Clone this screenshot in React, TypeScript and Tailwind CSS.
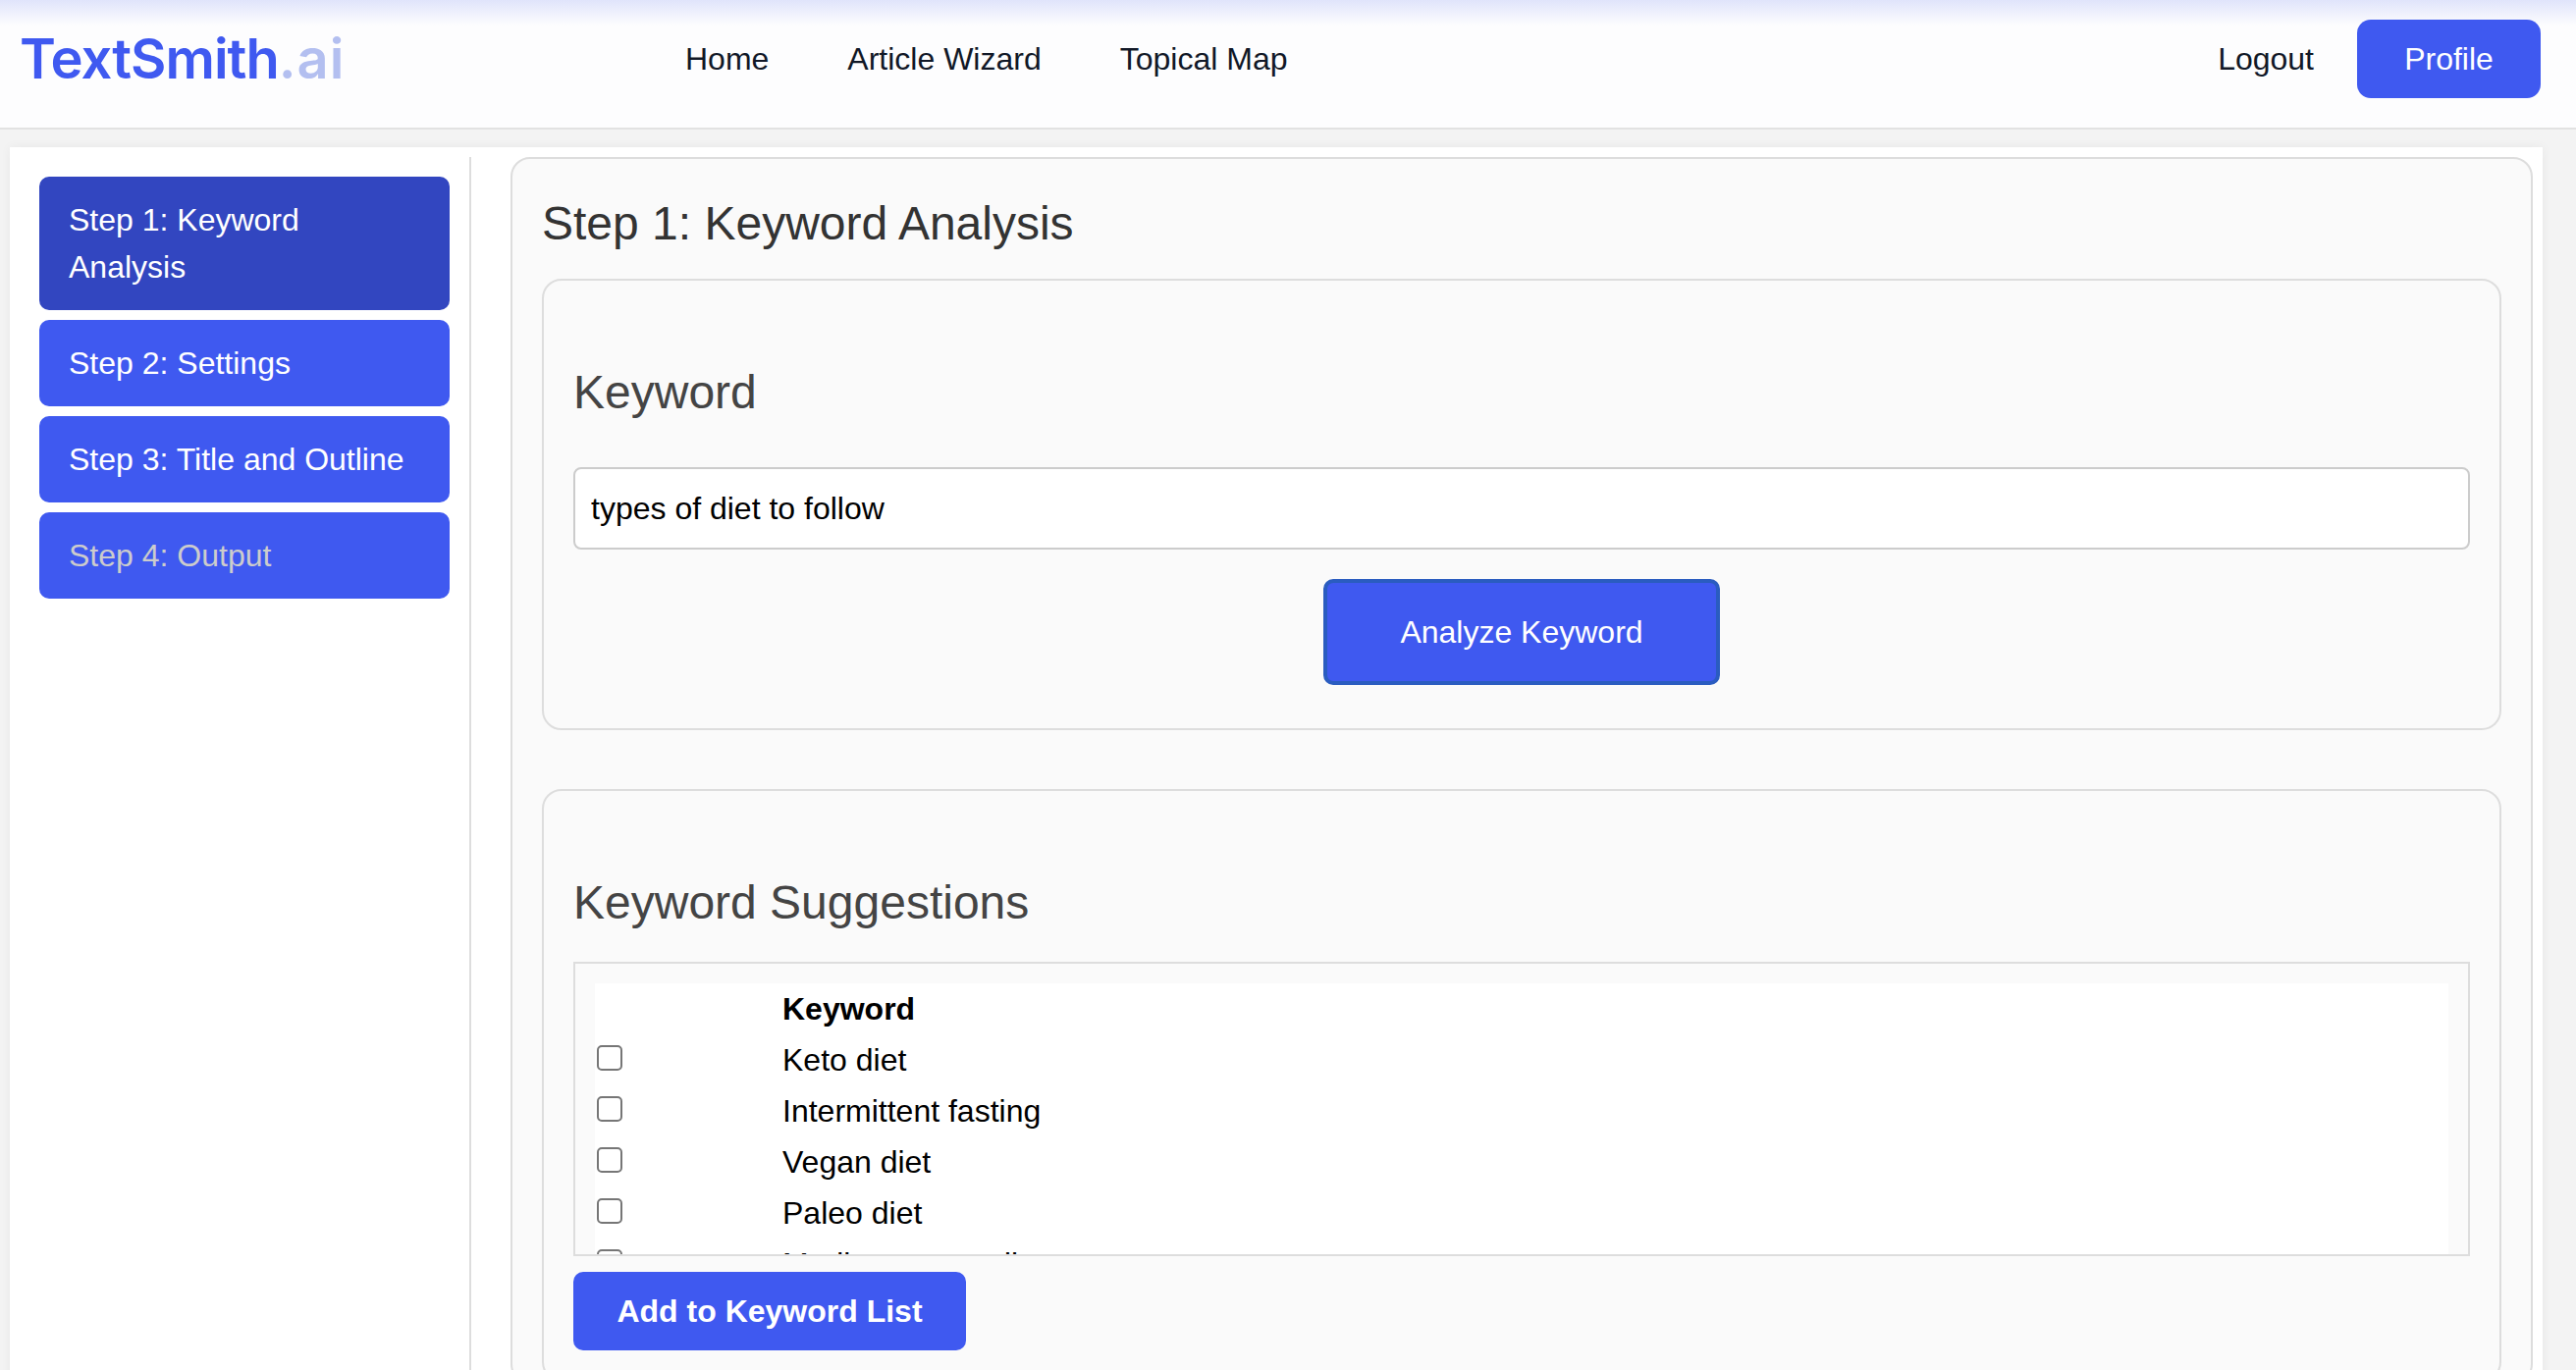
const sans = "font-['Liberation_Sans',Arial,sans-serif]";

const steps = [
  { label: "Step 1: Keyword Analysis", active: true },
  { label: "Step 2: Settings" },
  { label: "Step 3: Title and Outline" },
  { label: "Step 4: Output", muted: true },
];

const suggestions = ["Keto diet", "Intermittent fasting", "Vegan diet", "Paleo diet", "Mediterranean diet", "Low carb diet"];

const Header = () => (
  <header className="h-[132px] border-b-2 border-[#e2e2e2] bg-[linear-gradient(to_bottom,#e0e4fb_0px,#fdfdfe_26px)] pl-5 pr-9 pb-[10px] flex items-center">
    <div className="w-[678px] font-['Inter',sans-serif] font-semibold text-[56px] leading-none text-[#3f59f0] tracking-[-1px]">
      TextSmith<span className="text-[#b3bff0] tracking-[1px]">.ai</span>
    </div>
    <nav className="flex gap-20 text-[32px] text-[#111827]">
      <a>Home</a>
      <a>Article Wizard</a>
      <a>Topical Map</a>
    </nav>
    <div className="ml-auto flex items-center gap-[44px]">
      <a className="text-[32px] text-[#111827]">Logout</a>
      <button className="w-[187px] h-20 rounded-[14px] bg-[#3f59f0] text-white text-[32px]">Profile</button>
    </div>
  </header>
);

const Sidebar = () => (
  <aside className="w-[470px] shrink-0 pl-[30px] pr-[20px] pt-5 border-r-2 border-[#dddddd] flex flex-col gap-[10px]">
    {steps.map((step) => (
      <div
        key={step.label}
        className={`rounded-[10px] px-[30px] py-5 text-[32px] leading-[48px] ${step.active ? "bg-[#3246c0]" : "bg-[#3f59f0]"} ${step.muted ? "text-[#cccccc]" : "text-white"}`}
      >
        {step.label}
      </div>
    ))}
  </aside>
);

const KeywordPanel = () => (
  <section className="h-[460px] rounded-[20px] border-2 border-[#dddddd] bg-[#fafafa] px-[30px] pt-[86px]">
    <h3 className="text-[48px] leading-[56px] text-[#444444]">Keyword</h3>
    <input
      readOnly
      value="types of diet to follow"
      className="mt-[48px] block w-full h-[84px] rounded-[8px] border-2 border-[#cccccc] bg-white px-4 text-[32px] text-black"
    />
    <div className="mt-[30px] flex justify-center">
      <button className="w-[404px] h-[108px] rounded-[10px] border-4 border-[#2a5cc0] bg-[#3f59f0] text-white text-[32px]">
        Analyze Keyword
      </button>
    </div>
  </section>
);

const SuggestionsPanel = () => (
  <section className="mt-[60px] rounded-[20px] border-2 border-[#dddddd] bg-[#fafafa] px-[30px] pt-[86px] pb-[30px]">
    <h3 className="text-[48px] leading-[56px] text-[#444444]">Keyword Suggestions</h3>
    <div className="mt-[32px] h-[300px] overflow-hidden border-2 border-[#dddddd] px-5 pt-5">
      <table className="w-full bg-white text-[32px] leading-[52px] text-black border-collapse">
        <thead>
          <tr>
            <th className="w-[191px]" />
            <th className="text-left font-bold">Keyword</th>
          </tr>
        </thead>
        <tbody>
          {suggestions.map((s) => (
            <tr key={s}>
              <td className="align-middle pl-[2px]">
                <input type="checkbox" className="block mb-1 appearance-none w-[26px] h-[26px] rounded-[5px] border-2 border-[#767676] bg-white" />
              </td>
              <td>{s}</td>
            </tr>
          ))}
        </tbody>
      </table>
    </div>
    <button className="mt-[16px] block w-[400px] h-20 rounded-[10px] bg-[#3f59f0] text-white text-[32px] font-bold">
      Add to Keyword List
    </button>
  </section>
);

export default function App() {
  return (
    <div className={`h-[1396px] overflow-hidden bg-[#f3f3f3] ${sans}`}>
      <Header />
      <div className="mt-[18px] ml-[10px] w-[2580px] h-[1300px] bg-white pt-[10px] flex shadow-[0_0_10px_rgba(0,0,0,0.05)]">
        <Sidebar />
        <main className="ml-10 w-[2060px] h-fit rounded-[20px] border-2 border-[#dddddd] bg-[#fafafa] px-[30px] pt-[31px]">
          <h2 className="text-[48px] leading-[70px] text-[#333333] mb-[21px]">Step 1: Keyword Analysis</h2>
          <KeywordPanel />
          <SuggestionsPanel />
        </main>
      </div>
    </div>
  );
}
